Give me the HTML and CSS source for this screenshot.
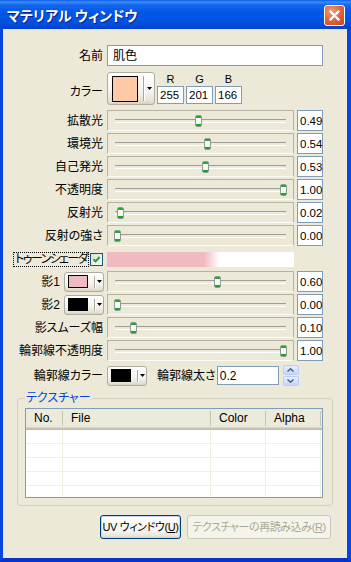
FILE: index.html
```html
<!DOCTYPE html>
<html lang="ja">
<head>
    <meta charset="UTF-8">
    <title>マテリアル ウィンドウ</title>
    <link rel="stylesheet" href="styles.css">
</head>
<body>
    <div class="window">
        <div class="titlebar">
            <span class="title">マテリアル ウィンドウ</span>
            <span class="close">
                <svg width="11" height="11" viewBox="0 0 11 11"><path d="M1.5 1.5L9.5 9.5M9.5 1.5L1.5 9.5" stroke="#fff" stroke-width="2.2" stroke-linecap="square"/></svg>
            </span>
        </div>

        <div class="client">
            <!-- name -->
            <div class="row name-row">
                <span class="lbl">名前</span>
                <div class="field name">肌色</div>
            </div>

            <!-- base colour -->
            <div class="row color-row">
                <span class="lbl color-lbl">カラー</span>
                <div class="colorbtn large">
                    <span class="swatch" style="background:#ffc9a6"></span>
                    <span class="sep"></span>
                    <span class="arrow"><svg width="5" height="3" viewBox="0 0 5 3"><path d="M0 0H5L2.5 3Z" fill="#000"/></svg></span>
                </div>
                <div class="rgb">
                    <div class="ch"><span>R</span><div class="field num">255</div></div>
                    <div class="ch"><span>G</span><div class="field num">201</div></div>
                    <div class="ch"><span>B</span><div class="field num">166</div></div>
                </div>
            </div>

            <!-- sliders -->
            <div class="row srow first">
                <span class="lbl">拡散光</span>
                <div class="slider"><span class="thumb" style="left:87px"></span></div>
                <div class="field val">0.49</div>
            </div>
            <div class="row srow">
                <span class="lbl">環境光</span>
                <div class="slider"><span class="thumb" style="left:96px"></span></div>
                <div class="field val">0.54</div>
            </div>
            <div class="row srow">
                <span class="lbl">自己発光</span>
                <div class="slider"><span class="thumb" style="left:94px"></span></div>
                <div class="field val">0.53</div>
            </div>
            <div class="row srow">
                <span class="lbl">不透明度</span>
                <div class="slider"><span class="thumb" style="left:172px"></span></div>
                <div class="field val">1.00</div>
            </div>
            <div class="row srow">
                <span class="lbl">反射光</span>
                <div class="slider"><span class="thumb" style="left:9px"></span></div>
                <div class="field val">0.02</div>
            </div>
            <div class="row srow">
                <span class="lbl">反射の強さ</span>
                <div class="slider"><span class="thumb" style="left:6px"></span></div>
                <div class="field val">0.00</div>
            </div>

            <!-- toon -->
            <div class="row toon-row">
                <div class="lbl toon-lbl">
                    <span class="focus">トゥーンシェーダ</span>
                    <span class="check"><svg width="11" height="11" viewBox="0 0 11 11"><path d="M2.5 5.2L4.6 7.4L8.6 3" fill="none" stroke="#21a121" stroke-width="2"/></svg></span>
                </div>
                <div class="gradient"></div>
            </div>

            <div class="row srow shadow first-shadow">
                <span class="lbl short">影1</span>
                <div class="colorbtn small">
                    <span class="swatch" style="background:#f0bac1"></span>
                    <span class="sep"></span>
                    <span class="arrow"><svg width="5" height="3" viewBox="0 0 5 3"><path d="M0 0H5L2.5 3Z" fill="#000"/></svg></span>
                </div>
                <div class="slider"><span class="thumb" style="left:106px"></span></div>
                <div class="field val">0.60</div>
            </div>
            <div class="row srow shadow">
                <span class="lbl short">影2</span>
                <div class="colorbtn small">
                    <span class="swatch" style="background:#000"></span>
                    <span class="sep"></span>
                    <span class="arrow"><svg width="5" height="3" viewBox="0 0 5 3"><path d="M0 0H5L2.5 3Z" fill="#000"/></svg></span>
                </div>
                <div class="slider"><span class="thumb" style="left:6px"></span></div>
                <div class="field val">0.00</div>
            </div>
            <div class="row srow">
                <span class="lbl">影スムーズ幅</span>
                <div class="slider"><span class="thumb" style="left:22px"></span></div>
                <div class="field val">0.10</div>
            </div>
            <div class="row srow">
                <span class="lbl">輪郭線不透明度</span>
                <div class="slider"><span class="thumb" style="left:172px"></span></div>
                <div class="field val">1.00</div>
            </div>

            <!-- outline -->
            <div class="row outline-row">
                <span class="lbl">輪郭線カラー</span>
                <div class="colorbtn small">
                    <span class="swatch" style="background:#000"></span>
                    <span class="sep"></span>
                    <span class="arrow"><svg width="5" height="3" viewBox="0 0 5 3"><path d="M0 0H5L2.5 3Z" fill="#000"/></svg></span>
                </div>
                <span class="width-lbl">輪郭線太さ</span>
                <div class="field width">0.2</div>
                <div class="spin">
                    <span><svg width="7" height="4" viewBox="0 0 7 4"><path d="M0.5 3.5L3.5 0.8L6.5 3.5" fill="none" stroke="#4d6185" stroke-width="1.5"/></svg></span>
                    <span><svg width="7" height="4" viewBox="0 0 7 4"><path d="M0.5 0.5L3.5 3.2L6.5 0.5" fill="none" stroke="#4d6185" stroke-width="1.5"/></svg></span>
                </div>
            </div>

            <!-- textures -->
            <fieldset class="group">
                <legend>テクスチャー</legend>
                <div class="listview">
                    <div class="lv-head">
                        <span>No.</span>
                        <span>File</span>
                        <span>Color</span>
                        <span>Alpha</span>
                    </div>
                    <div class="lv-body">
                        <span></span><span></span><span></span><span></span>
                    </div>
                </div>
            </fieldset>

            <div class="buttons">
                <div class="btn default">UV ウィンドウ(<u>U</u>)</div>
                <div class="btn disabled">テクスチャーの再読み込み(<u>R</u>)</div>
            </div>
        </div>
    </div>
</body>
</html>
```

FILE: styles.css
```css
* {
    margin: 0;
    padding: 0;
    box-sizing: border-box;
}

body {
    width: 351px;
    height: 562px;
    overflow: hidden;
    font-family: "Liberation Sans", "Noto Sans CJK JP", sans-serif;
    font-size: 12px;
    line-height: 14px;
    color: #000;
    font-feature-settings: "palt" 1;
    background: #0a46dc;
}

.window {
    width: 351px;
    height: 562px;
    display: flex;
    flex-direction: column;
}

/* title bar */
.titlebar {
    height: 29px;
    flex: none;
    display: flex;
    align-items: center;
    justify-content: space-between;
    padding: 0 6px 0 7px;
    background: linear-gradient(#0a5de6 0, #3d8bf6 2px, #1466ee 5px, #0257e8 12px, #0054e3 20px, #004ad8 26px, #003ec8 29px);
}

.title {
    color: #fff;
    font-weight: bold;
    font-size: 14px;
    font-family: "Noto Sans CJK JP", sans-serif;
    text-shadow: 1px 1px 0 #0a1f8a;
    padding-top: 1px;
}

.close {
    width: 21px;
    height: 21px;
    border: 1px solid #fff;
    border-radius: 3px;
    display: flex;
    align-items: center;
    justify-content: center;
    background: radial-gradient(circle at 35% 30%, #f0a080 0, #e0693f 45%, #c8401a 100%);
    margin-top: 1px;
}

/* client area */
.client {
    flex: 1;
    display: flex;
    flex-direction: column;
    background: #ece9d8;
    border-left: 3px solid #0a46dc;
    border-right: 4px solid #0a46dc;
    border-bottom: 4px solid #0734c8;
}

.row {
    display: flex;
    align-items: center;
    flex: none;
}

.lbl {
    width: 104px;
    flex: none;
    padding-right: 4px;
    text-align: right;
    white-space: nowrap;
}

.field {
    background: #fff;
    border: 1px solid #7f9db9;
    display: flex;
    align-items: center;
    padding: 0 2px;
    white-space: nowrap;
}

.name-row {
    margin-top: 16px;
    height: 21px;
}

.field.name {
    width: 216px;
    height: 21px;
    padding-left: 5px;
}

.color-row {
    margin-top: 6px;
    height: 33px;
    align-items: flex-start;
}

.color-lbl {
    align-self: flex-end;
    padding-bottom: 6px;
}

.rgb {
    display: flex;
    gap: 2px;
    margin-left: 2px;
}

.ch {
    display: flex;
    flex-direction: column;
    align-items: center;
    width: 27px;
}

.ch span {
    height: 14px;
    font-size: 11px;
}

.field.num {
    width: 27px;
    height: 18px;
    font-size: 11.5px;
}

/* colour pick buttons */
.colorbtn {
    flex: none;
    display: flex;
    align-items: center;
    border: 1px solid #b0ada0;
    border-radius: 3px;
    background: linear-gradient(#ffffff, #f4f3ee 60%, #e3e0d4 90%, #d6d2c4);
}

.colorbtn .swatch {
    border: 1px solid #000;
    flex: none;
}

.colorbtn .sep {
    width: 2px;
    align-self: stretch;
    margin: 3px 0;
    border-left: 1px solid #aca899;
    border-right: 1px solid #fff;
}

.colorbtn .arrow {
    flex: 1;
    display: flex;
    justify-content: center;
}

.colorbtn.large {
    width: 48px;
    height: 33px;
}

.colorbtn.large .swatch {
    width: 26px;
    height: 26px;
    margin: 0 5px 0 4px;
}

.colorbtn.small {
    width: 40px;
    height: 20px;
}

.colorbtn.small .swatch {
    width: 20px;
    height: 13px;
    margin: 0 6px 0 3px;
}

/* sliders */
.srow {
    height: 21px;
    margin-top: 2px;
}

.srow.first {
    margin-top: 5px;
}

.slider {
    position: relative;
    flex: none;
    width: 187px;
    height: 21px;
    margin-right: 3px;
    border: 1px solid #b5b2a4;
    border-bottom-color: #fbfbf8;
}

.slider::before {
    content: '';
    position: absolute;
    left: 7px;
    right: 7px;
    top: 8px;
    height: 2px;
    border-top: 1px solid #9d9c95;
    border-bottom: 1px solid #fff;
}

.thumb {
    position: absolute;
    top: 4px;
    width: 7px;
    height: 12px;
    border: 1px solid #8b9b98;
    border-radius: 2px;
    background: linear-gradient(#1eae1e 0, #1eae1e 2px, #fff 2px, #f1f1ec 8px, #21a121 8px);
}

.field.val {
    width: 26px;
    height: 21px;
    font-size: 11.5px;
}

/* toon shader */
.toon-row {
    margin-top: 6px;
    height: 15px;
}

.toon-lbl {
    display: flex;
    justify-content: flex-end;
    align-items: center;
    gap: 2px;
}

.focus {
    outline: 1px dotted #000;
    line-height: 13px;
    padding: 0 1px;
    letter-spacing: -1.6px;
}

.check {
    width: 13px;
    height: 13px;
    border: 1px solid #1c5180;
    background: linear-gradient(135deg, #dcdcd7, #fff);
    display: flex;
}

.gradient {
    width: 187px;
    height: 15px;
    background: linear-gradient(90deg, #f0bac1 52%, #fff 60%);
}

.srow.first-shadow {
    margin-top: 4px;
}

.lbl.short {
    width: 59px;
    padding-right: 2px;
}

.shadow .colorbtn {
    margin: 0 3px 0 2px;
}

/* outline */
.outline-row {
    margin-top: 4px;
    height: 21px;
}

.width-lbl {
    margin-left: 10px;
    white-space: nowrap;
}

.field.width {
    width: 62px;
    height: 19px;
    margin-left: 1px;
}

.spin {
    width: 16px;
    height: 21px;
    margin-left: 4px;
    display: flex;
    flex-direction: column;
    gap: 1px;
}

.spin span {
    flex: 1;
    display: flex;
    align-items: center;
    justify-content: center;
    border-radius: 2px;
    background: linear-gradient(#e6eefc, #c5d5fb);
    border: 1px solid #bccdf5;
}

/* texture group */
.group {
    margin: 5px 14px 0 14px;
    padding: 3px 9px 7px 7px;
    border: 1px solid #d0d0bf;
    border-radius: 4px;
    flex: none;
}

.group legend {
    color: #0046d5;
    margin-left: 0;
    padding: 0 1px;
    line-height: 14px;
}

.listview {
    height: 90px;
    border: 1px solid #7f9db9;
    background: #fff;
}

.lv-head,
.lv-body {
    display: grid;
    grid-template-columns: 37px 148px 55px 55px;
}

.lv-head {
    height: 21px;
    background: #ebeadb;
    box-shadow: inset 0 -1px #c1bdae, inset 0 -2px #cbc7b8, inset 0 -3px #d6d2c2;
}

.lv-head span {
    padding: 1px 0 0 8px;
    border-right: 1px solid #c7c5b2;
    margin: 2px 0 4px;
    line-height: 13px;
}

.lv-body {
    height: 67px;
    background: repeating-linear-gradient(#fff 0, #fff 13px, #f0efe4 13px, #f0efe4 14px);
}

.lv-body span {
    border-right: 1px solid #f0efe4;
}

/* bottom buttons */
.buttons {
    display: flex;
    justify-content: flex-end;
    gap: 6px;
    margin: 9px 16px 0 0;
}

.btn {
    height: 24px;
    display: flex;
    align-items: center;
    justify-content: center;
    border: 1px solid #003c74;
    border-radius: 3px;
    font-size: 11px;
    white-space: nowrap;
    letter-spacing: -0.4px;
    background: linear-gradient(#fff, #f4f3ee 70%, #e1ddd0);
}

.btn.default {
    width: 81px;
    box-shadow: inset 0 0 0 1px #c3d5fd;
}

.btn.disabled {
    width: 144px;
    color: #aca899;
    border-color: #c9c7ba;
    background: #f5f4ea;
}
```
